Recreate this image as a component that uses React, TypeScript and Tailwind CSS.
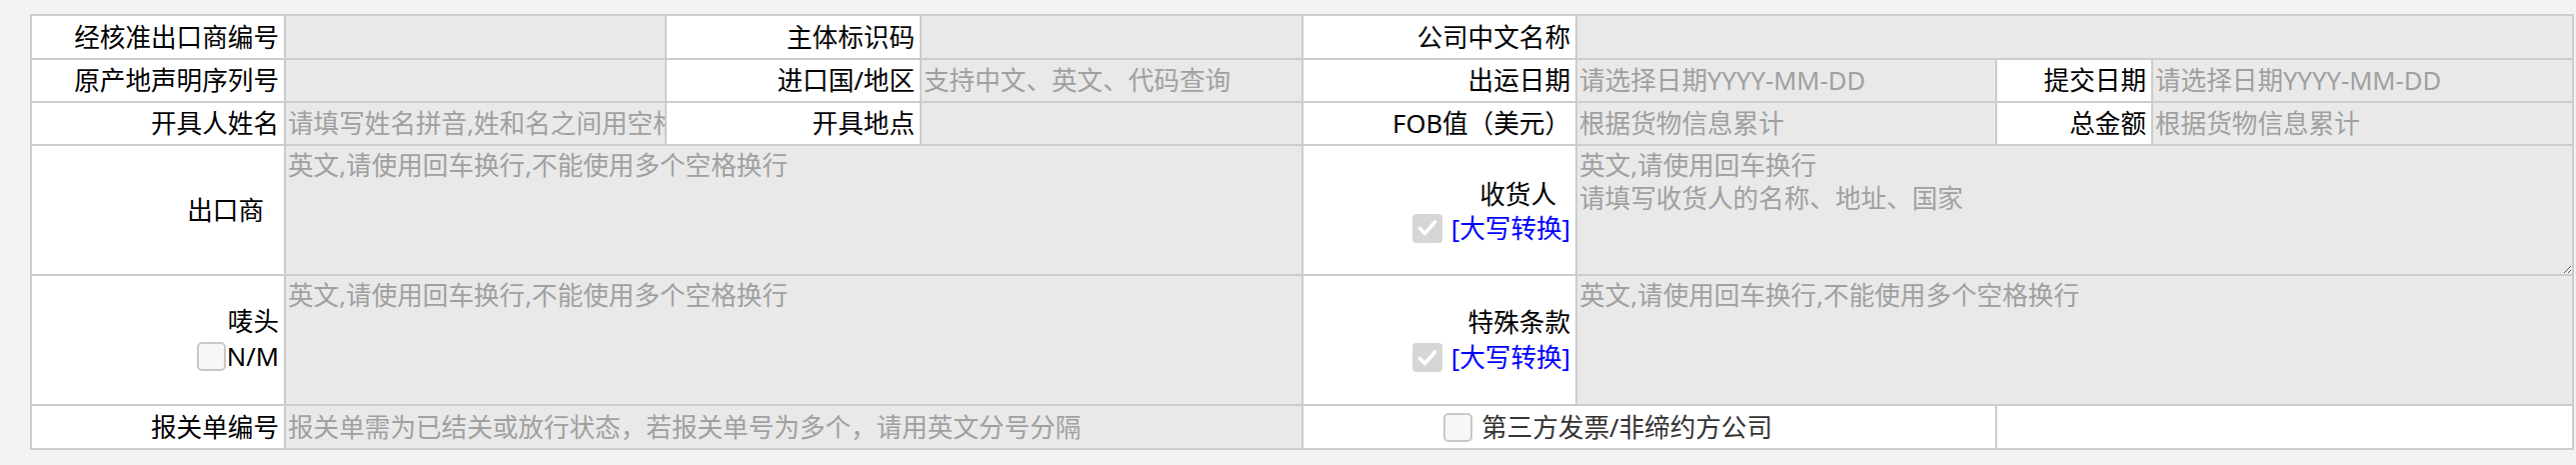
import React from "react";

const cell = "border-r-2 border-b-2 border-[#cccccc]";
const labelCls =
  "border-r-2 border-b-2 border-[#cccccc] bg-white flex items-center justify-end pr-[5px] text-black whitespace-nowrap overflow-hidden";
const inputCellCls = "border-r-2 border-b-2 border-[#cccccc] bg-[#e9e9e9] overflow-hidden";
const inputCls =
  "w-full h-full bg-transparent pl-[2px] pr-0 outline-none text-[25.6px] text-black placeholder:text-[#a0a0a0] font-['Noto_Sans','Noto_Sans_CJK_SC',sans-serif]";
const areaCls =
  "block w-full h-full bg-transparent pl-[2px] pt-[3px] outline-none text-[25.6px] leading-[33px] text-black placeholder:text-[#a0a0a0] font-['Noto_Sans','Noto_Sans_CJK_SC',sans-serif]";

function Label({ children, className = "" }: { children?: React.ReactNode; className?: string }) {
  return <div className={`${labelCls} ${className}`}>{children}</div>;
}

function Field({ placeholder = "", className = "" }: { placeholder?: string; className?: string }) {
  return (
    <div className={`${inputCellCls} ${className}`}>
      <input className={inputCls} placeholder={placeholder} />
    </div>
  );
}

function Area({ placeholder = "", resize = false }: { placeholder?: string; resize?: boolean }) {
  return (
    <div className={`${inputCellCls} col-span-3`}>
      <textarea
        className={`${areaCls} ${resize ? "resize" : "resize-none"}`}
        placeholder={placeholder}
      />
    </div>
  );
}

function CheckedBox() {
  return (
    <span className="inline-flex w-[30px] h-[29px] rounded-[4px] bg-[#d6d6d6] items-center justify-center shrink-0">
      <svg width="20" height="18" viewBox="0 0 20 18">
        <path d="M2.5 9.5 L7.5 14.5 L17.5 3" fill="none" stroke="#ffffff" strokeWidth="3.6" strokeLinecap="round" strokeLinejoin="round" />
      </svg>
    </span>
  );
}

function EmptyBox() {
  return (
    <span className="inline-block w-[29px] h-[29px] rounded-[5px] border-2 border-[#c8c8c8] bg-[#f7f7f7] shrink-0" />
  );
}

export default function App() {
  return (
    <div className="min-h-screen w-full bg-[#f2f2f2] pt-[14px] pl-[30px] font-['Noto_Sans','Noto_Sans_CJK_SC',sans-serif] text-[25.6px] leading-[33px]">
      <div className="grid w-fit border-l-2 border-t-2 border-[#cccccc] grid-cols-[254px_381px_255px_382px_274px_420px_156px_421px] grid-rows-[44px_43px_43px_130px_130px_44px]">
        {/* Row 1 */}
        <Label>经核准出口商编号</Label>
        <Field />
        <Label>主体标识码</Label>
        <Field />
        <Label>公司中文名称</Label>
        <Field className="col-span-3" />

        {/* Row 2 */}
        <Label>原产地声明序列号</Label>
        <Field />
        <Label>进口国/地区</Label>
        <Field placeholder="支持中文、英文、代码查询" />
        <Label>出运日期</Label>
        <Field placeholder="请选择日期YYYY-MM-DD" />
        <Label>提交日期</Label>
        <Field placeholder="请选择日期YYYY-MM-DD" />

        {/* Row 3 */}
        <Label>开具人姓名</Label>
        <Field placeholder="请填写姓名拼音,姓和名之间用空格" />
        <Label>开具地点</Label>
        <Field />
        <Label>FOB值（美元）</Label>
        <Field placeholder="根据货物信息累计" />
        <Label>总金额</Label>
        <Field placeholder="根据货物信息累计" />

        {/* Row 4 */}
        <Label>
          <span className="mr-[15px]">出口商</span>
        </Label>
        <Area placeholder="英文,请使用回车换行,不能使用多个空格换行" />
        <div className={`${cell} bg-white flex flex-col items-end justify-center pr-[5px] pt-[4px] whitespace-nowrap`}>
          <span className="mr-[14px] leading-[32px]">收货人</span>
          <span className="flex items-center h-[34px] gap-[9px]">
            <CheckedBox />
            <span className="text-[#0000ff]">[大写转换]</span>
          </span>
        </div>
        <Area resize placeholder={"英文,请使用回车换行\n请填写收货人的名称、地址、国家"} />

        {/* Row 5 */}
        <div className={`${cell} bg-white flex flex-col items-end justify-center pr-[5px] whitespace-nowrap`}>
          <span className="leading-[33px]">唛头</span>
          <span className="flex items-center h-[38px] gap-[1px]">
            <EmptyBox />
            <span>N/M</span>
          </span>
        </div>
        <Area placeholder="英文,请使用回车换行,不能使用多个空格换行" />
        <div className={`${cell} bg-white flex flex-col items-end justify-center pr-[5px] pt-[2px] whitespace-nowrap`}>
          <span className="leading-[33px]">特殊条款</span>
          <span className="flex items-center h-[37px] gap-[9px]">
            <CheckedBox />
            <span className="text-[#0000ff]">[大写转换]</span>
          </span>
        </div>
        <Area placeholder="英文,请使用回车换行,不能使用多个空格换行" />

        {/* Row 6 */}
        <Label>报关单编号</Label>
        <Field className="col-span-3" placeholder="报关单需为已结关或放行状态，若报关单号为多个，请用英文分号分隔" />
        <div className={`${cell} col-span-2 bg-white flex items-center pl-[140px] gap-[9px] whitespace-nowrap`}>
          <EmptyBox />
          <span className="text-[#333333]">第三方发票/非缔约方公司</span>
        </div>
        <div className={`${cell} col-span-2 bg-white`} />
      </div>
    </div>
  );
}
